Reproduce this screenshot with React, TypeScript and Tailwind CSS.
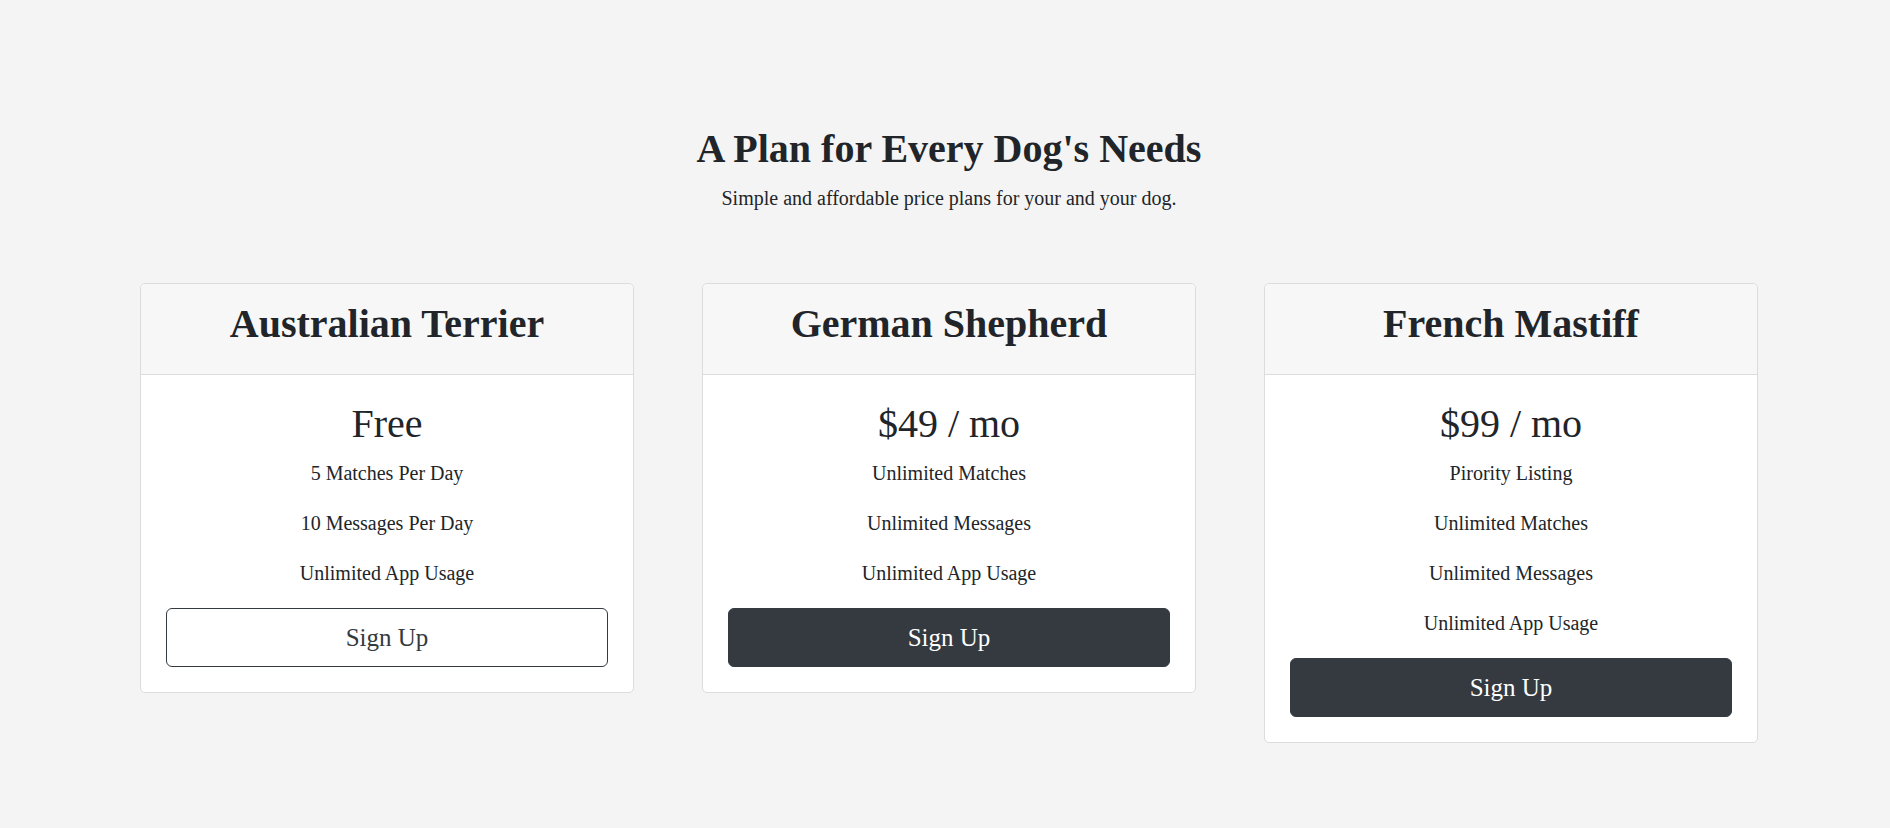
import React from "react";

interface Plan {
  name: string;
  price: string;
  features: string[];
  outline: boolean;
}

const plans: Plan[] = [
  {
    name: "Australian Terrier",
    price: "Free",
    features: ["5 Matches Per Day", "10 Messages Per Day", "Unlimited App Usage"],
    outline: true,
  },
  {
    name: "German Shepherd",
    price: "$49 / mo",
    features: ["Unlimited Matches", "Unlimited Messages", "Unlimited App Usage"],
    outline: false,
  },
  {
    name: "French Mastiff",
    price: "$99 / mo",
    features: [
      "Pirority Listing",
      "Unlimited Matches",
      "Unlimited Messages",
      "Unlimited App Usage",
    ],
    outline: false,
  },
];

const PricingCard = ({ name, price, features, outline }: Plan) => {
  return (
    <div className="w-[494px] bg-white border border-[#dcdcdc] rounded-[5px] text-center">
      <div className="bg-[#f7f7f7] border-b border-[#dcdcdc] rounded-t-[5px] px-[25px] pt-[16px] pb-[16px]">
        <h2 className="text-[40px] leading-[48px] font-bold mb-[10px]">{name}</h2>
      </div>
      <div className="p-[25px]">
        <h1 className="text-[40px] leading-[48px] font-normal mb-[10px]">{price}</h1>
        <ul>
          {features.map((f) => (
            <li key={f} className="text-[20px] leading-[30px] mb-[20px]">
              {f}
            </li>
          ))}
        </ul>
        <button
          className={`w-full text-[25px] leading-[37px] py-[10px] border rounded-[6px] ${
            outline
              ? "bg-white border-[#343a40] text-[#343a40]"
              : "bg-[#343a40] border-[#343a40] text-white"
          }`}
        >
          Sign Up
        </button>
      </div>
    </div>
  );
};

export default function App() {
  return (
    <div
      className="min-h-[828px] bg-[#f4f4f4] text-[#212529] pt-[125px] pb-[80px]"
      style={{ fontFamily: '"Liberation Serif", "Times New Roman", serif' }}
    >
      <div className="ml-[140px] w-[1618px]">
        <div className="text-center">
          <h1 className="text-[40px] leading-[48px] font-bold mb-[10px]">
            A Plan for Every Dog's Needs
          </h1>
          <p className="text-[20px] leading-[30px]">
            Simple and affordable price plans for your and your dog.
          </p>
        </div>
        <div className="flex items-start gap-[68px] mt-[70px]">
          {plans.map((p) => (
            <PricingCard key={p.name} {...p} />
          ))}
        </div>
      </div>
    </div>
  );
}
